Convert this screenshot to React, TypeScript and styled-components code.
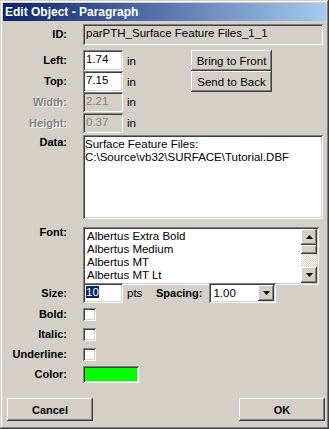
import styled, { createGlobalStyle, css } from "styled-components";

const GlobalStyle = createGlobalStyle`
  html, body {
    margin: 0;
    padding: 0;
    background: #d4d0c8;
  }
  * {
    box-sizing: border-box;
  }
`;

const FACE = "#d4d0c8";
const FONT = `"Liberation Sans", Arial, sans-serif`;

const raised = css`
  background: ${FACE};
  box-shadow: inset -1px -1px #404040, inset 1px 1px #ffffff,
    inset -2px -2px #808080, inset 2px 2px ${FACE};
`;

const sunken = css`
  box-shadow: inset 1px 1px #808080, inset -1px -1px #ffffff,
    inset 2px 2px #404040, inset -2px -2px ${FACE};
`;

//#region CSS styles
const Window = styled.div`
  width: 329px;
  height: 429px;
  padding: 3px;
  display: flex;
  flex-direction: column;
  background: ${FACE};
  box-shadow: inset -1px -1px #404040, inset 1px 1px ${FACE},
    inset -2px -2px #808080, inset 2px 2px #ffffff;
  font-family: ${FONT};
  font-size: 11.5px;
  color: #000;
`;

const TitleBar = styled.div`
  height: 18px;
  padding-left: 2px;
  display: flex;
  align-items: center;
  background: linear-gradient(to right, #0a246a, #a6caf0);
  color: #fff;
  font-weight: bold;
  font-size: 12px;
`;

const Form = styled.div`
  display: flex;
  flex-direction: column;
  padding: 3px 3px 0 0;
`;

const Row = styled.div<{ $gap?: number; $height: number; $top?: boolean }>`
  display: grid;
  grid-template-columns: 64px 1fr;
  column-gap: 16px;
  align-items: ${(p) => (p.$top ? "start" : "center")};
  height: ${(p) => p.$height}px;
  margin-top: ${(p) => p.$gap ?? 0}px;
`;

const Label = styled.span<{ $disabled?: boolean; $offset?: number }>`
  justify-self: end;
  font-weight: bold;
  font-size: 11px;
  line-height: 13px;
  margin-top: ${(p) => p.$offset ?? 0}px;
  color: ${(p) => (p.$disabled ? "#808080" : "#000")};
  text-shadow: ${(p) => (p.$disabled ? "1px 1px #fff" : "none")};
`;

const Controls = styled.div`
  display: flex;
  align-items: center;
  height: 100%;
`;

const TextBox = styled.div<{ $width?: number; $disabled?: boolean }>`
  ${sunken};
  width: ${(p) => (p.$width ? `${p.$width}px` : "100%")};
  height: 100%;
  padding: 3px 3px 0;
  line-height: 13px;
  white-space: nowrap;
  overflow: hidden;
  background: ${(p) => (p.$disabled ? FACE : "#fff")};
  color: ${(p) => (p.$disabled ? "#808080" : "#000")};
`;

const Unit = styled.span<{ $width?: number }>`
  width: ${(p) => p.$width ?? 32}px;
  padding-left: 4px;
  flex-shrink: 0;
`;

const PushButton = styled.button<{ $width: number; $height: number; $bold?: boolean }>`
  ${raised};
  border: none;
  width: ${(p) => p.$width}px;
  height: ${(p) => p.$height}px;
  padding: 0;
  font-family: ${FONT};
  font-size: ${(p) => (p.$bold ? "11px" : "11.5px")};
  font-weight: ${(p) => (p.$bold ? "bold" : "normal")};
  color: #000;
`;

const MultiLine = styled(TextBox)`
  white-space: pre;
  padding: 3px 2px;
`;

const ListBox = styled.div`
  ${sunken};
  width: 236px;
  height: 100%;
  background: #fff;
  padding: 2px;
  display: flex;
`;

const ListItems = styled.ul`
  flex: 1;
  margin: 0;
  padding: 1px 2px;
  list-style: none;
  line-height: 13px;
`;

const ScrollBar = styled.div`
  width: 16px;
  display: flex;
  flex-direction: column;
`;

const ScrollButton = styled.div<{ $size?: number }>`
  ${raised};
  width: ${(p) => p.$size ?? 16}px;
  height: ${(p) => p.$size ?? 16}px;
  flex-shrink: 0;
  display: flex;
  align-items: center;
  justify-content: center;
`;

const Thumb = styled.div`
  ${raised};
  height: 9px;
`;

const Track = styled.div`
  flex: 1;
  background-color: #fff;
  background-image: conic-gradient(
    ${FACE} 25%,
    transparent 0 50%,
    ${FACE} 0 75%,
    transparent 0
  );
  background-size: 2px 2px;
`;

const Selected = styled.span`
  background: #0a246a;
  color: #fff;
`;

const InlineLabel = styled.span`
  font-weight: bold;
  font-size: 11px;
  margin: 0 7px 0 12px;
`;

const ComboBox = styled.div`
  ${sunken};
  width: 67px;
  height: 100%;
  background: #fff;
  padding: 2px;
  display: flex;
  align-items: center;
`;

const ComboValue = styled.span`
  flex: 1;
  padding-left: 2px;
`;

const CheckBox = styled.div`
  ${sunken};
  width: 13px;
  height: 13px;
  background: #fff;
`;

const ColorSwatch = styled.div<{ $color: string }>`
  ${sunken};
  width: 56px;
  height: 17px;
  padding: 2px;
  background: ${(p) => p.$color};
  background-clip: content-box;
`;

const Footer = styled.div`
  margin-top: auto;
  display: flex;
  justify-content: space-between;
  padding: 0 1px 5px 4px;
`;
//#endregion

const Arrow = ({ down }: { down?: boolean }) => (
  <svg width="7" height="4" viewBox="0 0 7 4">
    <path d={down ? "M0 0H7L3.5 4Z" : "M3.5 0L7 4H0Z"} fill="#000" />
  </svg>
);

const fonts = [
  "Albertus Extra Bold",
  "Albertus Medium",
  "Albertus MT",
  "Albertus MT Lt",
];

export default function App() {
  return (
    <>
      <GlobalStyle />
      <Window>
        <TitleBar>Edit Object - Paragraph</TitleBar>
        <Form>
          <Row $height={21}>
            <Label>ID:</Label>
            <TextBox $disabled style={{ color: "#000" }}>
              parPTH_Surface Feature Files_1_1
            </TextBox>
          </Row>

          <Row $height={20} $gap={5}>
            <Label>Left:</Label>
            <Controls>
              <TextBox $width={40}>1.74</TextBox>
              <Unit $width={68}>in</Unit>
              <PushButton $width={81} $height={21}>
                Bring to Front
              </PushButton>
            </Controls>
          </Row>
          <Row $height={20} $gap={1}>
            <Label>Top:</Label>
            <Controls>
              <TextBox $width={40}>7.15</TextBox>
              <Unit $width={68}>in</Unit>
              <PushButton $width={81} $height={21}>
                Send to Back
              </PushButton>
            </Controls>
          </Row>
          <Row $height={20} $gap={1}>
            <Label $disabled>Width:</Label>
            <Controls>
              <TextBox $width={40} $disabled>
                2.21
              </TextBox>
              <Unit>in</Unit>
            </Controls>
          </Row>
          <Row $height={20} $gap={1}>
            <Label $disabled>Height:</Label>
            <Controls>
              <TextBox $width={40} $disabled>
                0.37
              </TextBox>
              <Unit>in</Unit>
            </Controls>
          </Row>

          <Row $height={84} $gap={2} $top>
            <Label $offset={1}>Data:</Label>
            <MultiLine>
              {"Surface Feature Files:\nC:\\Source\\vb32\\SURFACE\\Tutorial.DBF"}
            </MultiLine>
          </Row>

          <Row $height={54} $gap={8} $top>
            <Label $offset={-1}>Font:</Label>
            <ListBox>
              <ListItems>
                {fonts.map((f) => (
                  <li key={f}>{f}</li>
                ))}
              </ListItems>
              <ScrollBar>
                <ScrollButton>
                  <Arrow />
                </ScrollButton>
                <Thumb />
                <Track />
                <ScrollButton>
                  <Arrow down />
                </ScrollButton>
              </ScrollBar>
            </ListBox>
          </Row>

          <Row $height={20} $gap={2}>
            <Label>Size:</Label>
            <Controls>
              <TextBox $width={40}>
                <Selected>10</Selected>
              </TextBox>
              <Unit $width={21}>pts</Unit>
              <InlineLabel>Spacing:</InlineLabel>
              <ComboBox>
                <ComboValue>1.00</ComboValue>
                <ScrollButton $size={16}>
                  <Arrow down />
                </ScrollButton>
              </ComboBox>
            </Controls>
          </Row>

          <Row $height={13} $gap={5}>
            <Label>Bold:</Label>
            <CheckBox />
          </Row>
          <Row $height={13} $gap={7}>
            <Label>Italic:</Label>
            <CheckBox />
          </Row>
          <Row $height={13} $gap={7}>
            <Label>Underline:</Label>
            <CheckBox />
          </Row>
          <Row $height={17} $gap={5}>
            <Label>Color:</Label>
            <ColorSwatch $color="#00ff00" />
          </Row>
        </Form>
        <Footer>
          <PushButton $width={86} $height={23} $bold>
            Cancel
          </PushButton>
          <PushButton $width={86} $height={23} $bold>
            OK
          </PushButton>
        </Footer>
      </Window>
    </>
  );
}
